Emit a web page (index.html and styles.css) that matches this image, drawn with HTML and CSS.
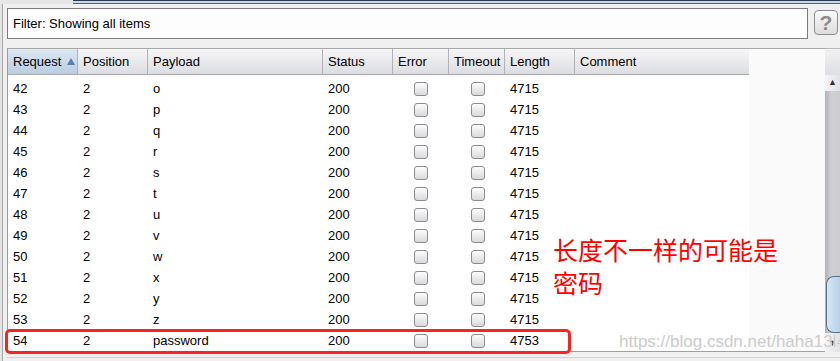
FILE: index.html
```html
<!DOCTYPE html>
<html lang="en">
<head>
    <meta charset="UTF-8">
    <title>Intruder Results</title>
    <link rel="stylesheet" href="styles.css">
</head>
<body>
    <div class="tabstrip">
        <div class="tab-open"></div>
        <div class="tab-line"></div>
    </div>
    <div class="app">
        <div class="filter-row">
            <div class="filter-box">Filter: Showing all items</div>
            <div class="help-btn">?</div>
        </div>
        <div class="results">
            <div class="table-pane">
                <div class="thead">
                    <span class="sorted">Request
                        <svg class="sort-arrow" width="8" height="7" viewBox="0 0 8 7"><polygon points="4,0 8,7 0,7" fill="#5a7fab"/></svg>
                    </span>
                    <span>Position</span>
                    <span>Payload</span>
                    <span>Status</span>
                    <span>Error</span>
                    <span>Timeout</span>
                    <span>Length</span>
                    <span>Comment</span>
                </div>
                <div class="viewport">
                    <div class="rows">
                        <!-- row 41 is scrolled almost out of view, only the checkbox bottoms show -->
                        <div class="row"><span></span><span></span><span></span><span></span><span class="box-cell err"><i class="check"></i></span><span class="box-cell tmo"><i class="check"></i></span><span></span><span></span></div>
                        <div class="row"><span>42</span><span>2</span><span>o</span><span>200</span><span class="box-cell err"><i class="check"></i></span><span class="box-cell tmo"><i class="check"></i></span><span>4715</span><span></span></div>
                        <div class="row"><span>43</span><span>2</span><span>p</span><span>200</span><span class="box-cell err"><i class="check"></i></span><span class="box-cell tmo"><i class="check"></i></span><span>4715</span><span></span></div>
                        <div class="row"><span>44</span><span>2</span><span>q</span><span>200</span><span class="box-cell err"><i class="check"></i></span><span class="box-cell tmo"><i class="check"></i></span><span>4715</span><span></span></div>
                        <div class="row"><span>45</span><span>2</span><span>r</span><span>200</span><span class="box-cell err"><i class="check"></i></span><span class="box-cell tmo"><i class="check"></i></span><span>4715</span><span></span></div>
                        <div class="row"><span>46</span><span>2</span><span>s</span><span>200</span><span class="box-cell err"><i class="check"></i></span><span class="box-cell tmo"><i class="check"></i></span><span>4715</span><span></span></div>
                        <div class="row"><span>47</span><span>2</span><span>t</span><span>200</span><span class="box-cell err"><i class="check"></i></span><span class="box-cell tmo"><i class="check"></i></span><span>4715</span><span></span></div>
                        <div class="row"><span>48</span><span>2</span><span>u</span><span>200</span><span class="box-cell err"><i class="check"></i></span><span class="box-cell tmo"><i class="check"></i></span><span>4715</span><span></span></div>
                        <div class="row"><span>49</span><span>2</span><span>v</span><span>200</span><span class="box-cell err"><i class="check"></i></span><span class="box-cell tmo"><i class="check"></i></span><span>4715</span><span></span></div>
                        <div class="row"><span>50</span><span>2</span><span>w</span><span>200</span><span class="box-cell err"><i class="check"></i></span><span class="box-cell tmo"><i class="check"></i></span><span>4715</span><span></span></div>
                        <div class="row"><span>51</span><span>2</span><span>x</span><span>200</span><span class="box-cell err"><i class="check"></i></span><span class="box-cell tmo"><i class="check"></i></span><span>4715</span><span></span></div>
                        <div class="row"><span>52</span><span>2</span><span>y</span><span>200</span><span class="box-cell err"><i class="check"></i></span><span class="box-cell tmo"><i class="check"></i></span><span>4715</span><span></span></div>
                        <div class="row"><span>53</span><span>2</span><span>z</span><span>200</span><span class="box-cell err"><i class="check"></i></span><span class="box-cell tmo"><i class="check"></i></span><span>4715</span><span></span></div>
                        <div class="row"><span>54</span><span>2</span><span>password</span><span>200</span><span class="box-cell err"><i class="check"></i></span><span class="box-cell tmo"><i class="check"></i></span><span>4753</span><span></span></div>
                    </div>
                </div>
            </div>
            <div class="vscroll">
                <div class="corner"></div>
                <div class="arrow up">&#9650;</div>
                <div class="track">
                    <div class="thumb"></div>
                </div>
                <div class="arrow down">&#9660;</div>
            </div>
        </div>
        <div class="bottom-edge"></div>
    </div>

    <!-- annotations drawn over the screenshot -->
    <div class="highlight"></div>
    <div class="note">长度不一样的可能是<br>密码</div>
    <div class="watermark">https://blog.csdn.net/haha13l4</div>
</body>
</html>
```

FILE: styles.css
```css
body {
    margin: 0;
    background-color: #e4e4e4;
    font-family: "Liberation Sans", Arial, sans-serif;
    font-size: 13px;
    color: #000;
    height: 361px;
    overflow: hidden;
    position: relative;
}

.tabstrip {
    display: flex;
    height: 4px;
}
.tab-open {
    width: 73px;
    background-color: #e6e6e6;
}
.tab-line {
    flex: 1;
    border-top: 1px solid #2c3b50;
    border-bottom: 1px solid #50647d;
    background-color: #c6d7ec;
}

.app {
    margin-left: 2px;
    border-left: 1px solid #a6a6a6;
    padding-left: 4px;
    background-color: #f0f0f0;
    height: 357px;
}

.filter-row {
    display: flex;
    align-items: flex-start;
    height: 44px;
    padding-top: 4px;
    box-sizing: border-box;
}
.filter-box {
    width: 801px;
    height: 31px;
    box-sizing: border-box;
    border: 1px solid #7c7c7c;
    background-color: #fdfdfd;
    padding-left: 5px;
    line-height: 29px;
}
.help-btn {
    margin-left: 6px;
    margin-top: 2px;
    width: 24px;
    height: 25px;
    box-sizing: border-box;
    border: 1px solid #8e8e8e;
    border-radius: 4px;
    background: linear-gradient(#fbfbfb, #dcdcde);
    color: #8c8c8c;
    font-weight: bold;
    font-size: 21px;
    line-height: 23px;
    text-align: center;
}

.results {
    display: flex;
    height: 304px;
}
.table-pane {
    width: 818px;
    box-sizing: border-box;
    border-left: 1px solid #9c9c9c;
    border-top: 1px solid #a8a8a8;
    border-bottom: 1px solid #a0a0a0;
    background-color: #fafafa;
}

.thead,
.row {
    display: grid;
    grid-template-columns: 69px 70px 175px 70px 56px 56px 70px 175px;
    width: 741px;
}
.thead span {
    display: flex;
    align-items: center;
    height: 25px;
    padding-left: 5px;
    border-left: 1px solid #b2b2b6;
    border-bottom: 1px solid #a9a9ad;
    background: linear-gradient(#f6f6f8, #dcdde1);
}
.thead span:first-child {
    border-left: none;
}
.thead .sorted {
    background: linear-gradient(#dde8f3, #b9cde2);
}
.sort-arrow {
    margin-left: 6px;
}

.viewport {
    height: 276px;
    overflow: hidden;
}
.rows {
    margin-top: -18px;
    background-color: #fff;
    width: 741px;
}
.row span {
    display: flex;
    align-items: center;
    height: 21px;
    padding-left: 6px;
}
.row span:first-child {
    padding-left: 5px;
}
.row .err {
    padding-left: 22px;
}
.row .tmo {
    padding-left: 23px;
}
.check {
    display: block;
    width: 14px;
    height: 14px;
    box-sizing: border-box;
    border: 1px solid #8d8d90;
    border-radius: 3px;
    background: linear-gradient(#fdfdfd, #d9d9dd);
}

.vscroll {
    width: 15px;
    display: flex;
    flex-direction: column;
}
.corner {
    height: 26px;
    border-top: 1px solid #b8b8b8;
    background: linear-gradient(#f1f1f3, #dedfe3);
}
.arrow {
    font-size: 9px;
    color: #333;
    text-align: center;
    background: linear-gradient(to right, #f4f4f6, #e2e2e6);
}
.arrow.up {
    height: 16px;
    line-height: 14px;
    border-radius: 0 0 0 6px;
}
.arrow.down {
    height: 19px;
    line-height: 20px;
}
.track {
    flex: 1;
    display: flex;
    flex-direction: column;
    justify-content: flex-end;
    background: linear-gradient(to right, #b3b3b9, #d0d0d5 45%, #cbcbd0);
}
.thumb {
    height: 57px;
    margin-left: 1px;
    box-sizing: border-box;
    border: 1px solid #56708c;
    border-right: none;
    border-radius: 8px 0 0 8px;
    background: linear-gradient(to right, #d8e6f4, #b8d0e8);
}

.bottom-edge {
    height: 5px;
    border-bottom: 1px solid #d2d2d2;
}

.highlight {
    position: absolute;
    left: 5px;
    top: 329px;
    width: 566px;
    height: 25px;
    box-sizing: border-box;
    border: 3px solid #fb2222;
    border-radius: 5px;
}
.note {
    position: absolute;
    left: 553px;
    top: 233px;
    font-family: "Noto Sans CJK SC", sans-serif;
    font-size: 25px;
    line-height: 33px;
    color: #ff0000;
}
.watermark {
    position: absolute;
    left: 619px;
    top: 332px;
    font-size: 17px;
    line-height: 20px;
    color: #cbcbcb;
    white-space: nowrap;
    text-shadow: 0 0 1px #fff;
}
```
